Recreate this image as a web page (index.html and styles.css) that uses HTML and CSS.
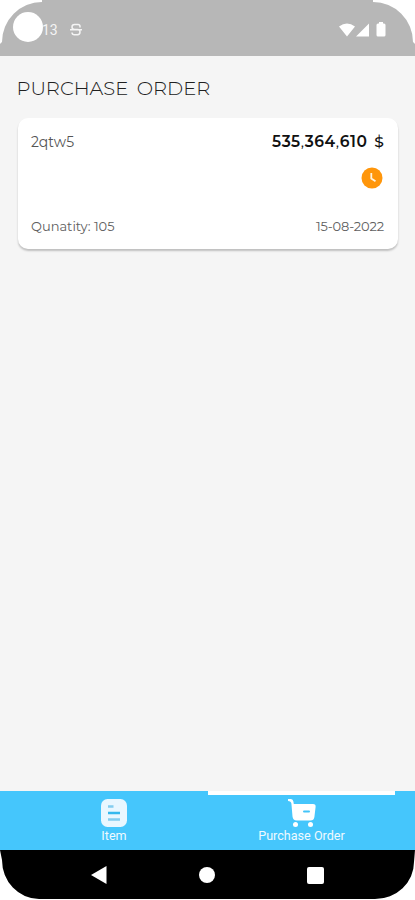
FILE: index.html
```
<!DOCTYPE html>
<html lang="en">
<head>
<meta charset="utf-8">
<meta name="viewport" content="width=device-width">
<title>Purchase Order</title>
<link rel="stylesheet" href="styles.css">
</head>
<body>
<div class="phone">
  <header class="status">
    <div class="status-left">
      <span class="camera"></span>
      <span class="time">13</span>
      <svg class="status-s" width="12" height="14" viewBox="0 0 12 14" fill="none" stroke="#f4f4f4" stroke-width="1.5"><path d="M10 4.500V3.500Q10 1.500 8 1.500H4.500Q2 1.500 2 4t2.500 2.500h3Q10 6.500 10 9t-2.500 2.800h-3Q2 11.800 2 9.500M0 6.700h12"/></svg>
    </div>
    <svg class="status-right" width="48" height="16" viewBox="0 0 48 16" fill="#fff"><path d="M0 4.500Q8 -1.500 16 4.500L8 14.500ZM17 14.500 30 1.500V14.500ZM40 1.500V0h4v1.500h1q1.500 0 1.500 1.500v10q0 1.500-1.500 1.500h-6q-1.500 0-1.500-1.500V3q0-1.500 1.500-1.500Z"/></svg>
  </header>
  <main class="content">
    <h1 class="title">PURCHASE ORDER</h1>
    <article class="card">
      <div class="row"><span class="name">2qtw5</span><span class="amount">535<span class="sep">,</span>364<span class="sep">,</span>610 <span class="currency">$</span></span></div>
      <div class="state">
        <svg width="22" height="22" viewBox="0 0 22 22"><circle cx="11" cy="11" r="10.500" fill="#ff960b"/><path d="M10.300 6v5.500l4.200 2.800" fill="none" stroke="#fff3df" stroke-width="1.800"/></svg>
      </div>
      <div class="row foot"><span class="quantity">Qunatity: 105</span><span class="date">15-08-2022</span></div>
    </article>
  </main>
  <nav class="tabs">
    <div class="tab">
      <svg width="26" height="28" viewBox="0 0 26 28"><rect width="26" height="28" rx="6.500" fill="#e9f7ff"/><g fill="none" stroke-width="2.500"><path d="M7 7.500h5.500M7 20.500h12" stroke="#83cdf0"/><path d="M7 14h12" stroke="#34b8ee"/></g></svg>
      <span class="label">Item</span>
    </div>
    <div class="tab active">
      <svg width="28" height="28" viewBox="0 0 28 28"><path d="M0 0h3q2 0 2.400 2.500L5.800 5H25q3 0 2.600 3l-1.200 10q-.5 3.500-4 3.500H8.500q-3.500 0-4-4L3.400 4.500Q3 2 0 2Z" fill="#fff"/><circle cx="7.500" cy="25.500" r="2.500" fill="#fff"/><circle cx="22.500" cy="25.500" r="2.500" fill="#fff"/><path d="M16 12.500h5" stroke="#43c4f9" stroke-width="2" stroke-linecap="round"/></svg>
      <span class="label">Purchase Order</span>
    </div>
  </nav>
  <footer class="system">
    <svg width="16" height="18" viewBox="0 0 16 18"><path d="M0 9 15.500 0V18Z" fill="#fff"/></svg>
    <span class="home"></span>
    <span class="recent"></span>
  </footer>
</div>
</body>
</html>
```
FILE: styles.css
```
* { box-sizing: border-box; }
body { margin: 0; background: #fff; }
.phone {
  width: 415px; height: 900px; overflow: hidden;
  display: flex; flex-direction: column;
  clip-path: path("M42 0H373V2A40 40 0 0 1 413 42L415 44V850L414 862A39 37 0 0 1 375 899H39A37 39 0 0 1 2 860L0 850V44L2 42A40 40 0 0 1 42 2Z");
  background: #f5f5f5;
  font-family: Montserrat, Inter, sans-serif;
}
.status {
  height: 56px; flex: none;
  display: flex; justify-content: space-between; align-items: center;
  padding: 3px 28px 0 13px;
  background: #b7b7b7;
}
.status-left { display: flex; align-items: center; }
.camera { width: 30px; height: 30px; border-radius: 50%; background: #fff; margin-top: -5px; }
.time { margin-left: -1px; width: 15px; font: 14px/16px Roboto, sans-serif; color: #f4f4f4; white-space: nowrap; }
.status-s { margin-left: 13px; }
.content { flex: 1; padding: 20px 17px 0; }
.title { margin: 0 0 0 -.5px; font-size: 19.500px; line-height: 24px; font-weight: 350; color: #202020; white-space: nowrap; word-spacing: 3.500px; }
.card {
  height: 131px; margin: 18px 0 0 1px;
  padding: 14px 14px 0 13px;
  border-radius: 10px;
  background: #fff;
  box-shadow: 0 2px 2px rgba(0,0,0,.22);
  display: flex; flex-direction: column;
}
.row { display: flex; justify-content: space-between; line-height: 20px; white-space: nowrap; }
.name { font-size: 14px; color: #555; }
.amount { font-size: 15.500px; font-weight: 600; color: #111; letter-spacing: .6px; margin-right: -.6px; }
.sep { font-weight: 400; }
.currency { font-weight: 500; margin-left: 2px; }
.state { height: 22px; margin-top: 15px; display: flex; justify-content: flex-end; padding-right: 1px; }
.foot { margin-top: 27px; font-size: 13px; color: #606060; font-weight: 400; }
.date { letter-spacing: -.15px; }
.tabs { height: 59px; flex: none; display: flex; padding: 0 20px 0 20px; background: #45c6fc; }
.tab { width: 188px; display: flex; flex-direction: column; align-items: center; padding-top: 8px; }
.active { width: 187px; box-shadow: inset 0 4px #fff; }
.label { font: 12.600px/14px Roboto, sans-serif; color: #effaff; margin-top: 2px; white-space: nowrap; }
.system { height: 50px; flex: none; display: flex; align-items: center; justify-content: space-between; padding: 0 91px 0 91px; background: #000; }
.home { width: 16px; height: 16px; border-radius: 50%; background: #fff; }
.recent { width: 17px; height: 17px; border-radius: 2px; background: #fff; }
```
